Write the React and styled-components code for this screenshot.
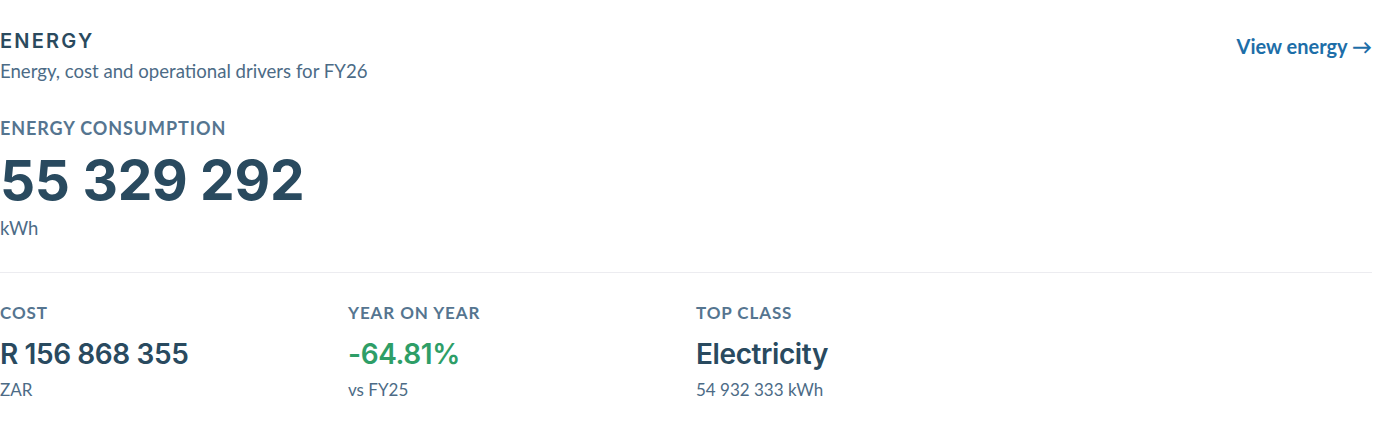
import styled, { createGlobalStyle } from 'styled-components'

const GlobalStyle = createGlobalStyle`
    html, body {
        margin: 0;
        padding: 0;
        background: #ffffff;
    }
    body {
        font-family: Lato, "Liberation Sans", sans-serif;
    }
`;

const Panel = styled.section`
    width: 1372px;
    padding: 28px 0 0 0;
    box-sizing: border-box;
`;

const Header = styled.div`
    display: flex;
    flex-direction: row;
    justify-content: space-between;
    align-items: flex-start;
`;

const TitleBlock = styled.div`
    display: flex;
    flex-direction: column;
`;

const Title = styled.h2`
    margin: 0;
    font-family: Inter, "Noto Sans", sans-serif;
    font-size: 20px;
    font-weight: 600;
    letter-spacing: 2.2px;
    line-height: 26px;
    color: #2a4a5e;
`;

const Subtitle = styled.p`
    margin: 6px 0 0 0;
    font-size: 18.6px;
    line-height: 22px;
    color: #4c6b86;
`;

const ViewLink = styled.a`
    margin-top: 6px;
    font-size: 20px;
    font-weight: 700;
    line-height: 24px;
    color: #1d6ea8;
    text-decoration: none;
    cursor: pointer;
`;

const Label = styled.div`
    font-size: ${p => p.$size || 17}px;
    font-weight: 700;
    letter-spacing: 0.9px;
    line-height: 20px;
    text-transform: uppercase;
    color: #557590;
`;

const Hero = styled.div`
    display: flex;
    flex-direction: column;
    margin-top: 36px;
    padding-bottom: 33px;
    border-bottom: 1px solid #ececf0;
`;

const HeroValue = styled.div`
    margin-top: 9px;
    font-family: Inter, "Noto Sans", sans-serif;
    font-size: 55px;
    font-weight: 700;
    letter-spacing: -0.3px;
    line-height: 66px;
    color: #294a5f;
`;

const Unit = styled.div`
    margin-top: ${p => p.$gap || 10}px;
    font-size: ${p => p.$size || 17}px;
    line-height: 22px;
    color: #4c6b86;
`;

const Stats = styled.div`
    display: grid;
    grid-template-columns: repeat(4, 1fr);
    gap: 20px;
    padding-top: 30px;
`;

const Stat = styled.div`
    display: flex;
    flex-direction: column;
`;

const StatValue = styled.div`
    margin-top: 14px;
    font-family: Inter, "Noto Sans", sans-serif;
    font-size: 28px;
    font-weight: 600;
    letter-spacing: -0.4px;
    line-height: 34px;
    color: ${p => p.$color || '#294a5f'};
`;

const stats = [
    { label: 'Cost', value: 'R 156 868 355', note: 'ZAR' },
    { label: 'Year on year', value: '-64.81%', note: 'vs FY25', color: '#2e9e67' },
    { label: 'Top class', value: 'Electricity', note: '54 932 333 kWh' },
];

const App = () => {
    return (
        <>
            <GlobalStyle />
            <Panel>
                <Header>
                    <TitleBlock>
                        <Title>ENERGY</Title>
                        <Subtitle>Energy, cost and operational drivers for FY26</Subtitle>
                    </TitleBlock>
                    <ViewLink>View energy →</ViewLink>
                </Header>
                <Hero>
                    <Label $size={18}>Energy consumption</Label>
                    <HeroValue>55 329 292</HeroValue>
                    <Unit $gap={4} $size={18.5}>kWh</Unit>
                </Hero>
                <Stats>
                    {stats.map(s => (
                        <Stat key={s.label}>
                            <Label>{s.label}</Label>
                            <StatValue $color={s.color}>{s.value}</StatValue>
                            <Unit $gap={8}>{s.note}</Unit>
                        </Stat>
                    ))}
                </Stats>
            </Panel>
        </>
    )
}

export default App;
